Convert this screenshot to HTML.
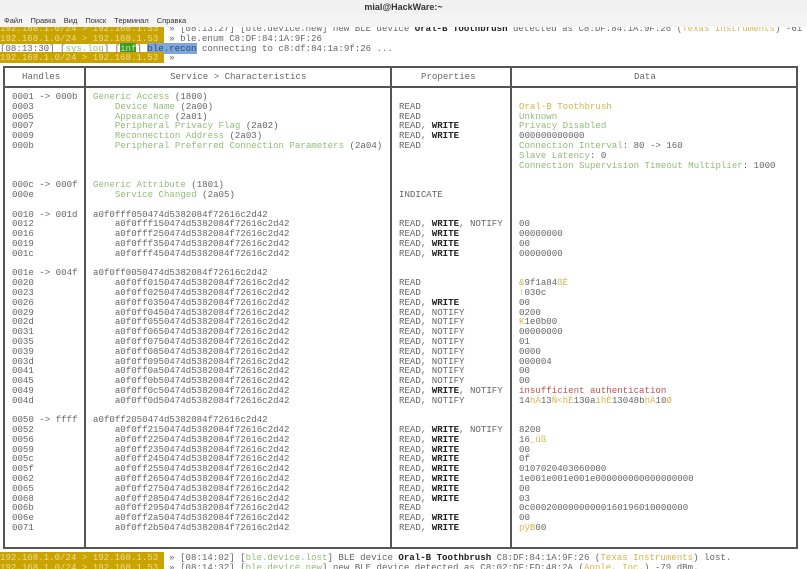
<!DOCTYPE html>
<html><head><meta charset="utf-8"><style>
*{margin:0;padding:0;box-sizing:border-box}
html,body{width:807px;height:569px;overflow:hidden;background:#fff}
body{position:relative;font-family:"Liberation Mono",monospace;font-size:9.1px;color:#666}
.t{position:absolute;white-space:pre;line-height:9.8px}
.g{color:#93bb78}.y{color:#d2b64c}.r{color:#c0504d}.b{color:#222;font-weight:bold}
.p{background:#c9a300;color:#ecdc98}
#title{position:absolute;left:0;top:0;width:807px;height:14px;background:#f1f1f1;font-family:"Liberation Sans",sans-serif;font-size:9px;font-weight:bold;color:#333;text-align:center;line-height:14px}
#menu{position:absolute;left:0;top:14px;width:807px;height:13px;background:#f4f4f4;font-family:"Liberation Sans",sans-serif;font-size:7.5px;color:#333;line-height:13px;padding-left:4px;z-index:2}
#menu span{margin-right:8px}
.bx{position:absolute;border:2px solid #555}
.vl{position:absolute;width:2px;background:#555;top:66px;height:483px}
</style></head><body>
<div id="title">mial@HackWare:~</div>
<div id="menu"><span>Файл</span><span>Правка</span><span>Вид</span><span>Поиск</span><span>Терминал</span><span>Справка</span></div>
<div class="t" style="left:0;top:24px"><span class="p">192.168.1.0/24 &gt; 192.168.1.53 </span> » [08:13:27] [ble.device.new] new BLE device <span class="b">Oral-B Toothbrush</span> detected as C8:DF:84:1A:9F:26 (<span class="y">Texas Instruments</span>) -61 dBm.
<span class="p">192.168.1.0/24 &gt; 192.168.1.53 </span> » ble.enum C8:DF:84:1A:9F:26
[08:13:30] [<span class="g">sys.log</span>] [<span style="background:#3a9a2a;color:#c8e8a0">inf</span>] <span style="background:#7ea6d8;color:#2a4a7a">ble.recon</span> connecting to c8:df:84:1a:9f:26 ...
<span class="p">192.168.1.0/24 &gt; 192.168.1.53 </span> »</div>

<div class="bx" style="left:3px;top:66px;width:795px;height:483px"></div>
<div style="position:absolute;left:3px;top:86px;width:795px;height:2px;background:#555"></div>
<div class="vl" style="left:84px"></div>
<div class="vl" style="left:390px"></div>
<div class="vl" style="left:510px"></div>

<div class="t" style="left:22px;top:72px">Handles</div>
<div class="t" style="left:170px;top:72px">Service &gt; Characteristics</div>
<div class="t" style="left:421px;top:72px">Properties</div>
<div class="t" style="left:634px;top:72px">Data</div>

<div class="t" style="left:12px;top:92px">0001 -&gt; 000b
0003
0005
0007
0009
000b



000c -&gt; 000f
000e

0010 -&gt; 001d
0012
0016
0019
001c

001e -&gt; 004f
0020
0023
0026
0029
002d
0031
0035
0039
003d
0041
0045
0049
004d

0050 -&gt; ffff
0052
0056
0059
005c
005f
0062
0065
0068
006b
006e
0071</div>

<div class="t" style="left:93px;top:92px"><span class="g">Generic Access</span> (1800)
    <span class="g">Device Name</span> (2a00)
    <span class="g">Appearance</span> (2a01)
    <span class="g">Peripheral Privacy Flag</span> (2a02)
    <span class="g">Reconnection Address</span> (2a03)
    <span class="g">Peripheral Preferred Connection Parameters</span> (2a04)



<span class="g">Generic Attribute</span> (1801)
    <span class="g">Service Changed</span> (2a05)

a0f0fff050474d5382084f72616c2d42
    a0f0fff150474d5382084f72616c2d42
    a0f0fff250474d5382084f72616c2d42
    a0f0fff350474d5382084f72616c2d42
    a0f0fff450474d5382084f72616c2d42

a0f0ff0050474d5382084f72616c2d42
    a0f0ff0150474d5382084f72616c2d42
    a0f0ff0250474d5382084f72616c2d42
    a0f0ff0350474d5382084f72616c2d42
    a0f0ff0450474d5382084f72616c2d42
    a0f0ff0550474d5382084f72616c2d42
    a0f0ff0650474d5382084f72616c2d42
    a0f0ff0750474d5382084f72616c2d42
    a0f0ff0850474d5382084f72616c2d42
    a0f0ff0950474d5382084f72616c2d42
    a0f0ff0a50474d5382084f72616c2d42
    a0f0ff0b50474d5382084f72616c2d42
    a0f0ff0c50474d5382084f72616c2d42
    a0f0ff0d50474d5382084f72616c2d42

a0f0ff2050474d5382084f72616c2d42
    a0f0ff2150474d5382084f72616c2d42
    a0f0ff2250474d5382084f72616c2d42
    a0f0ff2350474d5382084f72616c2d42
    a0f0ff2450474d5382084f72616c2d42
    a0f0ff2550474d5382084f72616c2d42
    a0f0ff2650474d5382084f72616c2d42
    a0f0ff2750474d5382084f72616c2d42
    a0f0ff2850474d5382084f72616c2d42
    a0f0ff2950474d5382084f72616c2d42
    a0f0ff2a50474d5382084f72616c2d42
    a0f0ff2b50474d5382084f72616c2d42</div>

<div class="t" style="left:399px;top:92px">
READ
READ
READ, <span class="b">WRITE</span>
READ, <span class="b">WRITE</span>
READ




INDICATE


READ, <span class="b">WRITE</span>, NOTIFY
READ, <span class="b">WRITE</span>
READ, <span class="b">WRITE</span>
READ, <span class="b">WRITE</span>


READ
READ
READ, <span class="b">WRITE</span>
READ, NOTIFY
READ, NOTIFY
READ, NOTIFY
READ, NOTIFY
READ, NOTIFY
READ, NOTIFY
READ, NOTIFY
READ, NOTIFY
READ, <span class="b">WRITE</span>, NOTIFY
READ, NOTIFY


READ, <span class="b">WRITE</span>, NOTIFY
READ, <span class="b">WRITE</span>
READ, <span class="b">WRITE</span>
READ, <span class="b">WRITE</span>
READ, <span class="b">WRITE</span>
READ, <span class="b">WRITE</span>
READ, <span class="b">WRITE</span>
READ, <span class="b">WRITE</span>
READ
READ, <span class="b">WRITE</span>
READ, <span class="b">WRITE</span></div>

<div class="t" style="left:519px;top:92px">
<span class="y">Oral-B Toothbrush</span>
<span class="g">Unknown</span>
<span class="g">Privacy Disabled</span>
000000000000
<span class="g">Connection Interval</span>: 80 -&gt; 160
<span class="g">Slave Latency</span>: 0
<span class="g">Connection Supervision Timeout Multiplier</span>: 1000





00
00000000
00
00000000


<span class="y">&amp;</span>9f1a84<span class="y">ßÈ</span>
<span class="y">!</span>030c
00
0200
<span class="y">K</span>1e0b00
00000000
01
0000
000004
00
00
<span class="r">insufficient authentication</span>
14<span class="y">hÄ</span>13<span class="y">Ñ&lt;hÈ</span>130a<span class="y">ihÈ</span>13048b<span class="y">hÄ</span>10<span class="y">Ø</span>


8200
16<span class="y">_ûß</span>
00
0f
0107020403060000
1e001e001e001e000000000000000000
00
03
0c00020000000000160196010000000
00
<span class="y">pÿB</span>00</div>

<div class="t" style="left:0;top:553px"><span class="p">192.168.1.0/24 &gt; 192.168.1.53 </span> » [08:14:02] [<span class="g">ble.device.lost</span>] BLE device <span class="b">Oral-B Toothbrush</span> C8:DF:84:1A:9F:26 (<span class="y">Texas Instruments</span>) lost.
<span class="p">192.168.1.0/24 &gt; 192.168.1.53 </span> » [08:14:32] [<span class="g">ble.device.new</span>] new BLE device detected as C8:02:DF:FD:48:2A (<span class="y">Apple, Inc.</span>) -79 dBm.</div>
</body></html>
